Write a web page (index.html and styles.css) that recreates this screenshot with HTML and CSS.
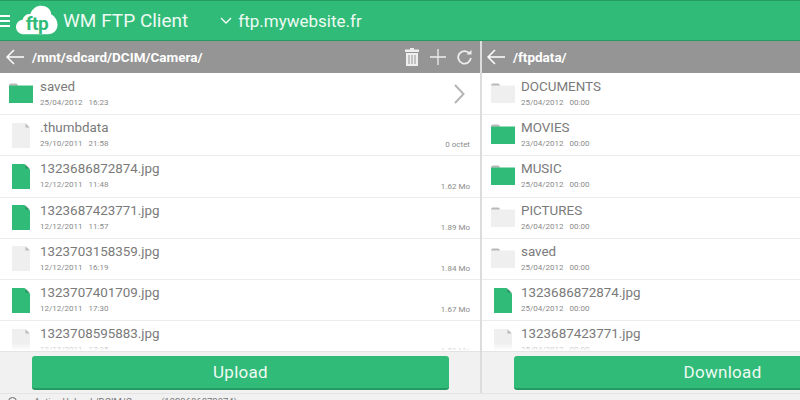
FILE: index.html
```html
<!DOCTYPE html>
<html lang="en">
<head>
    <meta charset="UTF-8">
    <meta name="viewport" content="width=device-width, initial-scale=1.0">
    <title>WM FTP Client</title>
    <link rel="stylesheet" href="styles.css">
</head>
<body>
    <svg class="defs" width="0" height="0">
        <symbol id="folder" viewBox="0 0 24 20">
            <path d="M0 2.500h24V20H0z"/>
            <path d="M0 2.500Q0 .5 2 .5h5q1.500 0 2 2z" fill="#000" fill-opacity=".28"/>
        </symbol>
        <symbol id="file" viewBox="0 0 18 25">
            <path d="M0 0h12.500L18 5.500V25H0z"/>
            <path d="M13.500 0L18 4.500h-4.500z" fill="#000" fill-opacity=".22"/>
        </symbol>
    </svg>

    <header class="topbar">
        <div class="menu"><i></i><i></i><i></i></div>
        <div class="logo">
            <svg class="cloud" viewBox="0 0 44 36" preserveAspectRatio="none">
                <path fill="#fff" d="M9 34C3 34 0 30 0 25.500 0 21 3 17.500 7 17 8 12 12 10 15 10.500 17 4 22 1 26 1c6 0 10.500 4 11 10 4 2 6.500 7 6.500 12 0 6-4 11-10 11z"/>
            </svg>
            <span class="logo-text">ftp</span>
        </div>
        <span class="app-name">WM FTP Client</span>
        <svg class="chevron" width="12" height="7" viewBox="0 0 12 7">
            <path d="M1 1l5 5 5-5" fill="none" stroke="#fff" stroke-width="1.300"/>
        </svg>
        <span class="host">ftp.mywebsite.fr</span>
    </header>

    <main class="panels">
        <section class="panel panel-local">
            <div class="pathbar">
                <svg class="back" width="18" height="16" viewBox="0 0 18 16">
                    <path d="M8 1L1 8l7 7M1 8h17" fill="none" stroke="#fff" stroke-width="1.500"/>
                </svg>
                <span class="path">/mnt/sdcard/DCIM/Camera/</span>
                <div class="tools">
                    <svg width="14" height="18" viewBox="0 0 14 18">
                        <path fill="#eee" d="M5 0h4v1.500h5V4H0V1.500h5zM1 5h12v13H1zM3.500 7v9h1V7zM6.500 7v9h1V7zM9.500 7v9h1V7z" fill-rule="evenodd"/>
                    </svg>
                    <svg width="16" height="16" viewBox="0 0 16 16">
                        <path d="M8 0v16M0 8h16" stroke="#eee" stroke-width="1.300"/>
                    </svg>
                    <svg width="15" height="15" viewBox="0 0 15 15">
                        <path d="M12.500 3.500A6.300 6.300 0 1 0 13.800 8" fill="none" stroke="#eee" stroke-width="1.800"/>
                        <path d="M9.500 4.500H14.500V0z" fill="#eee"/>
                    </svg>
                </div>
            </div>
            <ul class="files">
                <li class="row">
                    <svg class="icon icon-folder on"><use href="#folder"/></svg>
                    <div class="info"><div class="name">saved</div><div class="date">25/04/2012 &nbsp; 16:23</div></div>
                    <svg class="open" width="11" height="20" viewBox="0 0 11 20">
                        <path d="M1 1l8.500 9L1 19" fill="none" stroke="#b5b5b5" stroke-width="2"/>
                    </svg>
                </li>
                <li class="row">
                    <svg class="icon icon-file"><use href="#file"/></svg>
                    <div class="info"><div class="name">.thumbdata</div><div class="date">29/10/2011 &nbsp; 21:58</div></div>
                    <span class="size">0 octet</span>
                </li>
                <li class="row">
                    <svg class="icon icon-file on"><use href="#file"/></svg>
                    <div class="info"><div class="name">1323686872874.jpg</div><div class="date">12/12/2011 &nbsp; 11:48</div></div>
                    <span class="size">1.62 Mo</span>
                </li>
                <li class="row">
                    <svg class="icon icon-file on"><use href="#file"/></svg>
                    <div class="info"><div class="name">1323687423771.jpg</div><div class="date">12/12/2011 &nbsp; 11:57</div></div>
                    <span class="size">1.89 Mo</span>
                </li>
                <li class="row">
                    <svg class="icon icon-file"><use href="#file"/></svg>
                    <div class="info"><div class="name">1323703158359.jpg</div><div class="date">12/12/2011 &nbsp; 16:19</div></div>
                    <span class="size">1.84 Mo</span>
                </li>
                <li class="row">
                    <svg class="icon icon-file on"><use href="#file"/></svg>
                    <div class="info"><div class="name">1323707401709.jpg</div><div class="date">12/12/2011 &nbsp; 17:30</div></div>
                    <span class="size">1.67 Mo</span>
                </li>
                <li class="row">
                    <svg class="icon icon-file"><use href="#file"/></svg>
                    <div class="info"><div class="name">1323708595883.jpg</div><div class="date">12/12/2011 &nbsp; 17:35</div></div>
                    <span class="size">1.53 Mo</span>
                </li>
            </ul>
            <div class="actions"><button class="action">Upload</button></div>
        </section>

        <section class="panel panel-remote">
            <div class="pathbar">
                <svg class="back" width="18" height="16" viewBox="0 0 18 16">
                    <path d="M8 1L1 8l7 7M1 8h17" fill="none" stroke="#fff" stroke-width="1.500"/>
                </svg>
                <span class="path">/ftpdata/</span>
            </div>
            <ul class="files">
                <li class="row">
                    <svg class="icon icon-folder"><use href="#folder"/></svg>
                    <div class="info"><div class="name">DOCUMENTS</div><div class="date">25/04/2012 &nbsp; 00:00</div></div>
                </li>
                <li class="row">
                    <svg class="icon icon-folder on"><use href="#folder"/></svg>
                    <div class="info"><div class="name">MOVIES</div><div class="date">23/04/2012 &nbsp; 00:00</div></div>
                </li>
                <li class="row">
                    <svg class="icon icon-folder on"><use href="#folder"/></svg>
                    <div class="info"><div class="name">MUSIC</div><div class="date">25/04/2012 &nbsp; 00:00</div></div>
                </li>
                <li class="row">
                    <svg class="icon icon-folder"><use href="#folder"/></svg>
                    <div class="info"><div class="name">PICTURES</div><div class="date">26/04/2012 &nbsp; 00:00</div></div>
                </li>
                <li class="row">
                    <svg class="icon icon-folder"><use href="#folder"/></svg>
                    <div class="info"><div class="name">saved</div><div class="date">25/04/2012 &nbsp; 00:00</div></div>
                </li>
                <li class="row">
                    <svg class="icon icon-file on"><use href="#file"/></svg>
                    <div class="info"><div class="name">1323686872874.jpg</div><div class="date">25/04/2012 &nbsp; 00:00</div></div>
                </li>
                <li class="row">
                    <svg class="icon icon-file"><use href="#file"/></svg>
                    <div class="info"><div class="name">1323687423771.jpg</div><div class="date">25/04/2012 &nbsp; 00:00</div></div>
                </li>
            </ul>
            <div class="actions"><button class="action">Download</button></div>
        </section>
    </main>

    <footer class="status"><i class="status-icon"></i>Active Upload /DCIM/Camera (1323686872874)</footer>
</body>
</html>
```

FILE: styles.css
```css
* {
    box-sizing: border-box;
}
html, body {
    height: 100%;
}
body {
    margin: 0;
    overflow: hidden;
    font-family: Roboto, "Liberation Sans", sans-serif;
    background: #f1f1f1;
    color: #777;
    display: flex;
    flex-direction: column;
}
.defs {
    position: absolute;
}
.topbar {
    height: 41px;
    flex: none;
    background: #30bb78;
    border-top: 1px solid #259a62;
    border-bottom: 1px solid #259a62;
    display: flex;
    align-items: center;
    color: #eefaf3;
}
.menu {
    width: 16px;
    padding-right: 6px;
    display: flex;
    flex-direction: column;
    gap: 3px;
}
.menu i {
    height: 2px;
    background: #fff;
}
.logo {
    width: 42px;
    height: 31px;
    display: flex;
    align-items: center;
    justify-content: center;
    position: relative;
}
.cloud {
    position: absolute;
    left: 0;
    top: 0;
    width: 42px;
    height: 31px;
}
.logo-text {
    position: relative;
    font-size: 19px;
    font-weight: 700;
    color: #30bb78;
    margin-top: 5px;
    letter-spacing: -0.5px;
}
.app-name {
    margin-left: 5px;
    font-size: 19px;
}
.chevron {
    margin-left: 32px;
}
.host {
    margin-left: 6px;
    font-size: 17px;
}
.panels {
    flex: 1;
    min-height: 0;
    display: flex;
}
.panel {
    display: flex;
    flex-direction: column;
    min-width: 0;
}
.panel-local {
    width: 482px;
    border-right: 2px solid #dcdcdc;
}
.panel-remote {
    width: 318px;
}
.pathbar {
    height: 32px;
    flex: none;
    background: #959595;
    display: flex;
    align-items: center;
    padding-left: 6px;
    color: #fff;
}
.panel-remote .pathbar {
    padding-left: 5px;
}
.path {
    margin-left: 8px;
    font-size: 13.500px;
    font-weight: 700;
}
.tools {
    margin-left: auto;
    padding-right: 8px;
    display: flex;
    align-items: center;
    gap: 11px;
}
.files {
    list-style: none;
    margin: 0;
    padding: 1px 0 0;
    flex: 1;
    min-height: 0;
    overflow: hidden;
    position: relative;
    background: #fff;
}
/* list fades out just above the button strip */
.files::after {
    content: "";
    position: absolute;
    left: 0;
    right: 0;
    bottom: 0;
    height: 8px;
    background: linear-gradient(rgba(255, 255, 255, 0), #fff);
}
.row {
    height: 41.200px;
    display: flex;
    align-items: center;
    padding: 0 10px 0 9px;
    border-bottom: 1px solid #ececec;
}
.icon {
    flex: none;
    fill: #efefef;
}
.icon.on {
    fill: #30bb78;
}
.icon-folder {
    width: 24px;
    height: 20px;
    margin-top: -2px;
}
.icon-file {
    width: 18px;
    height: 25px;
    margin: 0 3px;
}
.info {
    margin-left: 7px;
    padding-bottom: 2px;
}
.panel-remote .info {
    margin-left: 6px;
}
.name {
    font-size: 13.400px;
    line-height: 18px;
    color: #7a7a7a;
}
.date {
    margin-top: 2px;
    font-size: 8px;
    line-height: 10px;
    color: #8a8a8a;
}
.open {
    margin-left: auto;
    margin-right: 5px;
}
.size {
    margin-left: auto;
    align-self: flex-end;
    margin-bottom: 6px;
    font-size: 8px;
    color: #8a8a8a;
}
.actions {
    height: 42px;
    flex: none;
    background: #f1f1f1;
    border-top: 1px solid #e4e4e4;
    padding: 4px 0 4px 32px;
    overflow: hidden;
}
.action {
    width: 417px;
    height: 34px;
    display: block;
    border: 0;
    border-bottom: 2px solid #259a62;
    border-radius: 3px;
    background: #30bb78;
    color: #eefaf3;
    font-family: inherit;
    font-size: 17px;
    letter-spacing: 0.3px;
}
.status {
    height: 7px;
    flex: none;
    position: relative;
    border-top: 1px solid #e4e4e4;
    padding: 2px 0 0 34px;
    font-size: 9.500px;
    line-height: 11px;
    color: #777;
    overflow: hidden;
}
.status-icon {
    position: absolute;
    left: 8px;
    top: 3px;
    width: 9px;
    height: 9px;
    border-radius: 50%;
    border: 1px solid #666;
}
```
